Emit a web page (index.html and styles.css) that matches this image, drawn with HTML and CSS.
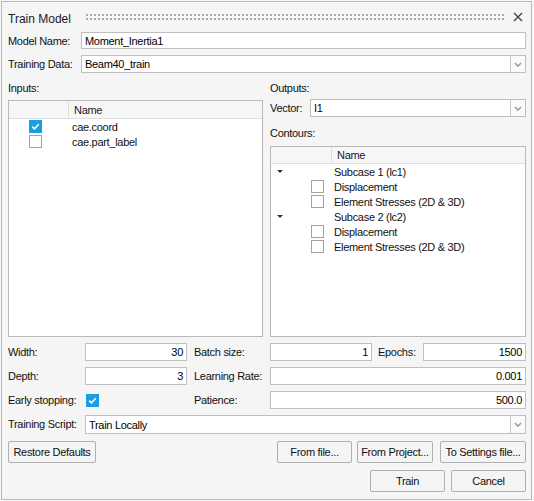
FILE: index.html
```html
<!DOCTYPE html>
<html>
<head>
<meta charset="utf-8">
<title>Train Model</title>
<link rel="stylesheet" href="styles.css">
</head>
<body>
<div class="window">
  <div class="titlebar">
    <span class="title">Train Model</span>
    <span class="grip"></span>
    <svg class="close" width="10" height="10" viewBox="0 0 10 10"><path d="M1 1L9 9M9 1L1 9" stroke="#3a3a3a" stroke-width="1.2" fill="none"/></svg>
  </div>

  <div class="frow">
    <span class="flabel">Model Name:</span>
    <div class="field grow">Moment_Inertia1</div>
  </div>
  <div class="frow frow2">
    <span class="flabel">Training Data:</span>
    <div class="combo grow">
      <span class="combo-text">Beam40_train</span>
      <span class="combo-btn"><svg width="8" height="5" viewBox="0 0 8 5"><path d="M1 1L4 4L7 1" stroke="#9a9a9a" stroke-width="1.6" fill="none"/></svg></span>
    </div>
  </div>

  <div class="io">
    <div class="col">
      <div class="sec-label">Inputs:</div>
      <div class="list inputs-list">
        <div class="lhead"><span class="hc1"></span><span class="hc2">Name</span></div>
        <div class="lrow"><span class="c1 in-chk"><span class="chk on"><svg width="13" height="13" viewBox="0 0 13 13"><path d="M3.2 6.6L5.4 8.8L9.8 4.3" stroke="#fff" stroke-width="1.6" fill="none"/></svg></span></span><span class="c2">cae.coord</span></div>
        <div class="lrow"><span class="c1 in-chk"><span class="chk"></span></span><span class="c2">cae.part_label</span></div>
      </div>
    </div>
    <div class="col">
      <div class="sec-label out-label">Outputs:</div>
      <div class="vrow">
        <span class="vlabel">Vector:</span>
        <div class="combo grow">
          <span class="combo-text">I1</span>
          <span class="combo-btn"><svg width="8" height="5" viewBox="0 0 8 5"><path d="M1 1L4 4L7 1" stroke="#9a9a9a" stroke-width="1.6" fill="none"/></svg></span>
        </div>
      </div>
      <div class="sec-label cont-label">Contours:</div>
      <div class="list tree">
        <div class="lhead"><span class="hc1"></span><span class="hc2">Name</span></div>
        <div class="lrow"><span class="c1 arr-cell"><span class="arrow"></span></span><span class="c2">Subcase 1 (lc1)</span></div>
        <div class="lrow"><span class="c1 tchk"><span class="chk"></span></span><span class="c2">Displacement</span></div>
        <div class="lrow"><span class="c1 tchk"><span class="chk"></span></span><span class="c2">Element Stresses (2D &amp; 3D)</span></div>
        <div class="lrow"><span class="c1 arr-cell"><span class="arrow"></span></span><span class="c2">Subcase 2 (lc2)</span></div>
        <div class="lrow"><span class="c1 tchk"><span class="chk"></span></span><span class="c2">Displacement</span></div>
        <div class="lrow"><span class="c1 tchk"><span class="chk"></span></span><span class="c2">Element Stresses (2D &amp; 3D)</span></div>
      </div>
    </div>
  </div>

  <div class="params">
    <span class="plabel">Width:</span>
    <div class="field num">30</div>
    <span class="plabel pl3">Batch size:</span>
    <div class="field num">1</div>
    <span class="plabel pl5">Epochs:</span>
    <div class="field num">1500</div>

    <span class="plabel">Depth:</span>
    <div class="field num">3</div>
    <span class="plabel pl3">Learning Rate:</span>
    <div class="field num span3">0.001</div>

    <span class="plabel">Early stopping:</span>
    <div class="es-cell"><span class="chk on"><svg width="13" height="13" viewBox="0 0 13 13"><path d="M3.2 6.6L5.4 8.8L9.8 4.3" stroke="#fff" stroke-width="1.6" fill="none"/></svg></span></div>
    <span class="plabel pl3">Patience:</span>
    <div class="field num span3">500.0</div>

    <span class="plabel">Training Script:</span>
    <div class="combo span5 tall">
      <span class="combo-text">Train Locally</span>
      <span class="combo-btn"><svg width="8" height="5" viewBox="0 0 8 5"><path d="M1 1L4 4L7 1" stroke="#9a9a9a" stroke-width="1.6" fill="none"/></svg></span>
    </div>
  </div>

  <div class="btnrow">
    <button class="btn b-restore">Restore Defaults</button>
    <button class="btn b-file">From file...</button>
    <button class="btn b-proj">From Project...</button>
    <button class="btn b-set">To Settings file...</button>
  </div>
  <div class="btnrow btnrow2">
    <button class="btn b-train">Train</button>
    <button class="btn b-cancel">Cancel</button>
  </div>
</div>
</body>
</html>
```

FILE: styles.css
```css
* { box-sizing: border-box; }
html, body {
  margin: 0;
  padding: 0;
  background: #f7f7f7;
}
body {
  font-family: "Liberation Sans", Arial, sans-serif;
  font-size: 11px;
  letter-spacing: -0.3px;
  color: #111;
}
.window {
  margin: 1px 0 0 1px;
  width: 531px;
  height: 499px;
  border: 1px solid #b8b8b8;
  background: #f5f5f5;
  padding: 0 5px 0 6px;
  display: flex;
  flex-direction: column;
}
.titlebar {
  height: 30px;
  padding-top: 3px;
  display: flex;
  align-items: center;
}
.title {
  font-size: 12px;
  letter-spacing: 0;
  color: #1a1a1a;
}
.grip {
  flex: 1;
  height: 8px;
  margin-left: 15px;
  margin-right: 8px;
  background-image: radial-gradient(circle at 1px 1px, #a9a9a9 0.9px, transparent 1.1px);
  background-size: 4px 4px;
  margin-top: -2px;
}
.close {
  margin-right: 3px;
  margin-top: -3px;
}
.frow {
  display: flex;
  align-items: center;
  height: 17px;
}
.frow2 {
  margin-top: 6px;
  height: 18px;
}
.flabel {
  width: 73px;
  flex: none;
}
.grow { flex: 1; }
.field {
  height: 100%;
  background: #fff;
  border: 1px solid #bfbfbf;
  padding: 0 3px;
  display: flex;
  align-items: center;
  color: #000;
  white-space: nowrap;
}
.field.num { justify-content: flex-end; }
.combo {
  height: 100%;
  background: #fff;
  border: 1px solid #bfbfbf;
  display: flex;
  align-items: stretch;
}
.combo-text {
  flex: 1;
  padding-left: 3px;
  display: flex;
  align-items: center;
  color: #000;
}
.combo-btn {
  width: 15px;
  flex: none;
  border-left: 1px solid #c9c9c9;
  display: flex;
  align-items: center;
  justify-content: center;
  background: #fafafa;
}
.io {
  display: grid;
  grid-template-columns: 255px 256px;
  column-gap: 7px;
  height: 264px;
}
.col {
  display: flex;
  flex-direction: column;
}
.sec-label {
  height: 27px;
  padding-top: 3px;
  display: flex;
  align-items: center;
  flex: none;
}
.out-label {
  height: 26px;
  padding-top: 4px;
}
.cont-label {
  height: 29px;
  padding-top: 3px;
}
.vrow {
  display: flex;
  align-items: center;
  height: 18px;
  flex: none;
}
.vlabel {
  width: 40px;
  flex: none;
}
.list {
  flex: 1;
  background: #fff;
  border: 1px solid #b9b9b9;
}
.lhead {
  display: flex;
  height: 18px;
  background: #f7f7f7;
  border-bottom: 1px solid #dedede;
}
.hc1 {
  width: 60px;
  border-right: 1px solid #dcdcdc;
}
.hc2 {
  padding-left: 5px;
  display: flex;
  align-items: center;
  color: #1a1a1a;
}
.tree .lhead { height: 17px; }
.tree .hc1 { width: 61px; }
.lrow {
  display: flex;
  height: 15px;
  align-items: center;
}
.c1 {
  width: 60px;
  flex: none;
  display: flex;
  align-items: center;
  height: 100%;
}
.c2 {
  padding-left: 3px;
  color: #111;
  white-space: nowrap;
}
.in-chk { padding-left: 20px; }
.tchk { padding-left: 40px; }
.arr-cell { padding-left: 6px; }
.arrow {
  width: 0;
  height: 0;
  border-left: 3px solid transparent;
  border-right: 3px solid transparent;
  border-top: 3px solid #303030;
}
.chk {
  width: 13px;
  height: 13px;
  border: 1px solid #a3a3a3;
  background: #fff;
  display: block;
  flex: none;
}
.chk.on {
  border: none;
  background: #1b9de2;
}
.chk svg { display: block; }
.params {
  margin-top: 6px;
  display: grid;
  grid-template-columns: 77px 102px 83px 102px 51px 103px;
  grid-auto-rows: 18px;
  row-gap: 6px;
}
.plabel {
  display: flex;
  align-items: center;
  white-space: nowrap;
}
.pl3 { padding-left: 7px; }
.pl5 { padding-left: 6px; }
.span3 { grid-column: 4 / 7; }
.span5 { grid-column: 2 / 7; }
.tall { height: 19px; }
.es-cell {
  display: flex;
  align-items: center;
  padding-left: 1px;
}
.btnrow {
  display: flex;
  margin-top: 8px;
  height: 22px;
}
.btnrow2 {
  margin-top: 7px;
  justify-content: flex-end;
}
.btn {
  font-family: "Liberation Sans", Arial, sans-serif;
  font-size: 11px;
  letter-spacing: -0.3px;
  color: #111;
  height: 22px;
  background: #f4f4f4;
  border: 1px solid #b0b0b0;
  border-radius: 2px;
  padding: 0;
  white-space: nowrap;
}
.b-restore { width: 88px; }
.b-file { width: 75px; margin-left: auto; }
.b-proj { width: 76px; margin-left: 5px; }
.b-set { width: 86px; margin-left: 7px; }
.b-train { width: 75px; }
.b-cancel { width: 75px; margin-left: 6px; }
```
